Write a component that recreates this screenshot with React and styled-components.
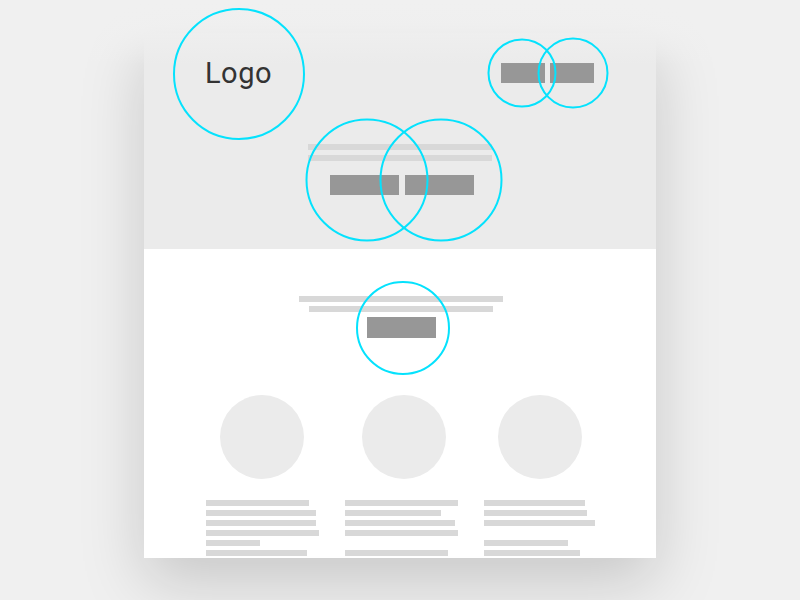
import React from 'react';
import styled, { createGlobalStyle } from 'styled-components';

const GlobalStyle = createGlobalStyle`
    html, body {
        margin: 0;
        padding: 0;
        height: 600px;
        overflow: hidden;
        background: #f0f0f0;
        font-family: Roboto, "Liberation Sans", sans-serif;
    }
`;

const Page = styled.div`
    position: relative;
    height: 600px;
    padding-top: 33px;
    box-sizing: border-box;
`;

const TopFade = styled.div`
    position: absolute;
    left: 0;
    right: 0;
    top: 0;
    height: 64px;
    background: linear-gradient(#f0f0f0 0%, rgba(240, 240, 240, 0.85) 40%, rgba(240, 240, 240, 0) 100%);
    z-index: 2;
    pointer-events: none;
`;

const Card = styled.div`
    width: 512px;
    height: 525px;
    margin: 0 auto;
    background: #ffffff;
    box-shadow: 0 24px 60px rgba(0, 0, 0, 0.17);
    display: flex;
    flex-direction: column;
`;

const Header = styled.header`
    height: 216px;
    background: #ebebeb;
    padding: 0 62px 0 61px;
    box-sizing: border-box;
    display: flex;
    flex-direction: column;
`;

const TopRow = styled.div`
    height: 80px;
    display: flex;
    align-items: center;
    justify-content: space-between;
`;

const Spot = styled.div`
    position: relative;
    display: flex;
`;

const Ring = styled.span`
    position: absolute;
    left: calc(50% + ${p => p.$dx || 0}px);
    top: calc(50% + ${p => p.$dy || 0}px);
    width: ${p => p.$size}px;
    height: ${p => p.$size}px;
    transform: translate(-50%, -50%);
    border: 2px solid #05e2fd;
    border-radius: 50%;
    box-sizing: border-box;
    z-index: 3;
    pointer-events: none;
`;

const LogoText = styled.span`
    font-size: 29px;
    line-height: 1;
    color: #333333;
    letter-spacing: 0.5px;
    margin-top: 1px;
`;

const Nav = styled.nav`
    display: flex;
    gap: 5px;
    margin-top: -1px;
`;

const Block = styled.div`
    width: ${p => p.$w}px;
    height: ${p => p.$h}px;
    background: #979797;
`;

const Hero = styled.div`
    margin-top: 31px;
    display: flex;
    flex-direction: column;
    align-items: center;
`;

const Line = styled.div`
    width: ${p => p.$w}px;
    height: 6px;
    background: #d8d8d8;
`;

const Lines = styled.div`
    display: flex;
    flex-direction: column;
    align-items: ${p => p.$align || 'center'};
    gap: ${p => p.$gap || 4}px;
`;

const ButtonRow = styled.div`
    display: flex;
    gap: 6px;
    margin-top: 14px;
    padding-left: 4px;
`;

const Body = styled.section`
    flex: 1;
    padding-top: 47px;
    display: flex;
    flex-direction: column;
    align-items: center;
`;

const Intro = styled.div`
    display: flex;
    flex-direction: column;
    align-items: center;
    padding-left: 2px;
`;

const CtaWrap = styled.div`
    margin-top: 5px;
`;

const Features = styled.div`
    display: grid;
    grid-template-columns: repeat(3, 114px);
    column-gap: 25px;
    margin-top: 57px;
    margin-left: 3px;
`;

const Feature = styled.div`
    display: flex;
    flex-direction: column;
`;

const Avatar = styled.div`
    width: 84px;
    height: 84px;
    border-radius: 50%;
    background: #ebebeb;
    align-self: center;
    margin-left: ${p => p.$shift || 0}px;
    margin-bottom: 21px;
`;

const Gap = styled.div`
    height: 6px;
`;

const features = [
    { shift: -2, lines: [103, 110, 110, 113, 54, 101] },
    { shift: 5, lines: [113, 96, 110, 113, 0, 103] },
    { shift: -1, lines: [101, 103, 111, 0, 84, 96] },
];

export default function App() {
    return (
        <Page>
            <GlobalStyle />
            <TopFade />
            <Card>
                <Header>
                    <TopRow>
                        <Spot>
                            <LogoText>Logo</LogoText>
                            <Ring $size={132} $dx={1} $dy={1} />
                        </Spot>
                        <Nav>
                            <Spot>
                                <Block $w={44} $h={20} />
                                <Ring $size={69} $dx={-1} $dy={0} />
                            </Spot>
                            <Spot>
                                <Block $w={44} $h={20} />
                                <Ring $size={71} $dx={1} $dy={0} />
                            </Spot>
                        </Nav>
                    </TopRow>
                    <Hero>
                        <Lines $gap={5}>
                            <Line $w={184} />
                            <Line $w={184} />
                        </Lines>
                        <ButtonRow>
                            <Spot>
                                <Block $w={69} $h={20} />
                                <Ring $size={123} $dx={3} $dy={-5} />
                            </Spot>
                            <Spot>
                                <Block $w={69} $h={20} />
                                <Ring $size={123} $dx={2} $dy={-5} />
                            </Spot>
                        </ButtonRow>
                    </Hero>
                </Header>
                <Body>
                    <Intro>
                        <Lines>
                            <Line $w={204} />
                            <Line $w={184} />
                        </Lines>
                        <CtaWrap>
                            <Spot>
                                <Block $w={69} $h={21} />
                                <Ring $size={94} $dx={2} $dy={0} />
                            </Spot>
                        </CtaWrap>
                    </Intro>
                    <Features>
                        {features.map((f, i) => (
                            <Feature key={i}>
                                <Avatar $shift={f.shift} />
                                <Lines $align="flex-start">
                                    {f.lines.map((w, j) =>
                                        w ? <Line key={j} $w={w} /> : <Gap key={j} />
                                    )}
                                </Lines>
                            </Feature>
                        ))}
                    </Features>
                </Body>
            </Card>
        </Page>
    );
}
